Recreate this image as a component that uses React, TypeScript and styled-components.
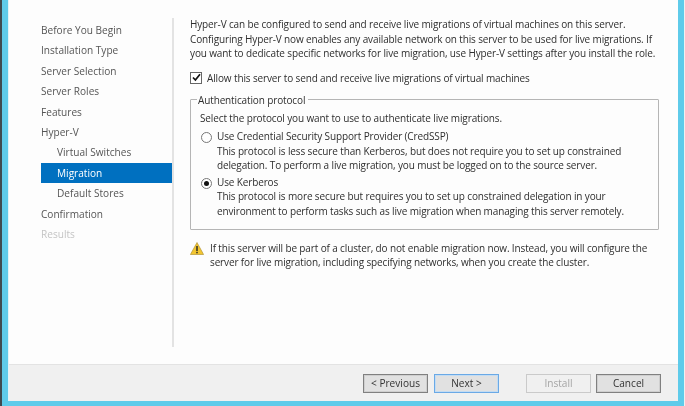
import React from 'react';
import styled, { createGlobalStyle } from 'styled-components';

const GlobalStyle = createGlobalStyle`
  html, body {
    margin: 0;
    padding: 0;
    width: 685px;
    height: 406px;
    overflow: hidden;
    background: #f4f4f4;
  }
`;

const Frame = styled.div`
  width: 685px;
  height: 406px;
  box-sizing: border-box;
  display: flex;
  flex-direction: column;
  padding: 0 6px 5px 6px;
  background: linear-gradient(#5fcbea, #5fcbea) no-repeat;
  border-left: 2px solid #3f4a50;
  border-right: 1px solid #f0f0f0;
  font-family: 'Open Sans', 'Noto Sans', sans-serif;
  font-size: 10.1px;
  color: #333;
  filter: blur(0.4px);
`;

const Dialog = styled.div`
  flex: 1;
  display: flex;
  flex-direction: column;
  background: #fdfdfd;
  border-left: 1px solid #e4f3f8;
`;

const Body = styled.div`
  flex: 1;
  display: flex;
  padding-top: 18px;
  min-height: 0;
`;

const Nav = styled.nav`
  width: 165px;
  height: 329px;
  box-sizing: border-box;
  padding: 2px 0 0 32px;
  border-right: 2px solid #e3e3e3;
  display: flex;
  flex-direction: column;
`;

const NavItem = styled.div<{ $sub?: boolean; $active?: boolean; $disabled?: boolean }>`
  height: 20.4px;
  line-height: 20.4px;
  padding-left: ${p => (p.$sub ? 16 : 0)}px;
  white-space: nowrap;
  color: ${p => (p.$active ? '#fff' : p.$disabled ? '#c4c4c4' : '#555')};
  background: ${p => (p.$active ? '#0070c0' : 'transparent')};
`;

const Content = styled.main`
  width: 469px;
  margin-left: 16px;
  margin-top: -1px;
  display: flex;
  flex-direction: column;
  font-size: 10px;
  letter-spacing: -0.13px;
`;

const Paragraph = styled.p`
  margin: 0;
  line-height: 14.5px;
  white-space: pre;
  color: #2e2e2e;
`;

const CheckRow = styled.div`
  display: flex;
  align-items: center;
  gap: 5px;
  margin-top: 10px;
  height: 14px;
  white-space: pre;
  color: #2e2e2e;
`;

const CheckBox = styled.span`
  width: 10px;
  height: 10px;
  border: 1px solid #666;
  background: #fff;
  display: flex;
  align-items: center;
  justify-content: center;
`;

const Group = styled.fieldset`
  margin: 8px 0 0 0;
  padding: 4px 9px 8px 9px;
  border: 1px solid #b5b5b5;
  border-radius: 1px;
  height: 137px;
  min-width: 0;
  box-sizing: border-box;
  width: 469px;
`;

const Legend = styled.legend`
  padding: 0 3px 0 1px;
  margin-left: -3px;
  line-height: 14px;
  color: #2e2e2e;
`;

const RadioRow = styled.div<{ $gapTop: number }>`
  display: flex;
  gap: 5px;
  margin-top: ${p => p.$gapTop}px;
  padding-left: 1px;
`;

const Radio = styled.span<{ $checked?: boolean }>`
  flex: none;
  width: 9px;
  height: 9px;
  margin-top: 3px;
  border: 1px solid #777;
  border-radius: 50%;
  background: #fff;
  display: flex;
  align-items: center;
  justify-content: center;
  &::after {
    content: '';
    width: 5px;
    height: 5px;
    border-radius: 50%;
    background: ${p => (p.$checked ? '#111' : 'transparent')};
  }
`;

const Warning = styled.div`
  display: flex;
  gap: 6px;
  margin-top: 11px;
`;

const Footer = styled.footer`
  height: 37px;
  flex: none;
  box-sizing: border-box;
  background: #f0f0f0;
  border-top: 1px solid #e3e3e3;
  display: flex;
  align-items: center;
  justify-content: flex-end;
  padding: 0 17px 0 0;
`;

const Button = styled.button<{ $focused?: boolean; $gap?: number }>`
  width: 65px;
  height: 19px;
  margin-left: ${p => p.$gap ?? 6}px;
  padding: 0;
  font: inherit;
  color: #333;
  background: #e1e1e1;
  border: 1px solid ${p => (p.$focused ? '#6aa9e6' : '#808080')};
  box-shadow: inset 0 0 0 1px ${p => (p.$focused ? '#c4dcf2' : '#cfcfcf')};
  &:disabled {
    color: #a5a5a5;
    background: #f0f0f0;
    border-color: #cacaca;
    box-shadow: none;
  }
`;

const navItems = [
  { label: 'Before You Begin' },
  { label: 'Installation Type' },
  { label: 'Server Selection' },
  { label: 'Server Roles' },
  { label: 'Features' },
  { label: 'Hyper-V' },
  { label: 'Virtual Switches', sub: true },
  { label: 'Migration', sub: true, active: true },
  { label: 'Default Stores', sub: true },
  { label: 'Confirmation' },
  { label: 'Results', disabled: true },
];

const App: React.FC = () => (
  <Frame>
    <GlobalStyle />
    <Dialog>
      <Body>
        <Nav>
          {navItems.map(item => (
            <NavItem key={item.label} $sub={item.sub} $active={item.active} $disabled={item.disabled}>
              {item.label}
            </NavItem>
          ))}
        </Nav>
        <Content>
          <Paragraph>
            {'Hyper-V can be configured to send and receive live migrations of virtual machines on this server.\nConfiguring Hyper-V now enables any available network on this server to be used for live migrations. If\nyou want to dedicate specific networks for live migration, use Hyper-V settings after you install the role.'}
          </Paragraph>
          <CheckRow>
            <CheckBox>
              <svg width="9" height="9" viewBox="0 0 9 9">
                <path d="M1 4.5 L3.4 7 L8 1.2" fill="none" stroke="#111" strokeWidth="1.7" />
              </svg>
            </CheckBox>
            Allow this server to send and receive live migrations of virtual machines
          </CheckRow>
          <Group>
            <Legend>Authentication protocol</Legend>
            <Paragraph>Select the protocol you want to use to authenticate live migrations.</Paragraph>
            <RadioRow $gapTop={4}>
              <Radio />
              <Paragraph>
                {'Use Credential Security Support Provider (CredSSP)\nThis protocol is less secure than Kerberos, but does not require you to set up constrained\ndelegation. To perform a live migration, you must be logged on to the source server.'}
              </Paragraph>
            </RadioRow>
            <RadioRow $gapTop={2}>
              <Radio $checked />
              <Paragraph>
                {'Use Kerberos\nThis protocol is more secure but requires you to set up constrained delegation in your\nenvironment to perform tasks such as live migration when managing this server remotely.'}
              </Paragraph>
            </RadioRow>
          </Group>
          <Warning>
            <svg width="14" height="13" viewBox="0 0 14 13" style={{ marginTop: 1, flex: 'none' }}>
              <path d="M7 0.5 L13.6 12.5 L0.4 12.5 Z" fill="#f2c530" stroke="#a8892a" strokeWidth="0.6" />
              <rect x="6.3" y="4" width="1.4" height="5" fill="#222" />
              <rect x="6.3" y="9.8" width="1.4" height="1.5" fill="#222" />
            </svg>
            <Paragraph>
              {'If this server will be part of a cluster, do not enable migration now. Instead, you will configure the\nserver for live migration, including specifying networks, when you create the cluster.'}
            </Paragraph>
          </Warning>
        </Content>
      </Body>
      <Footer>
        <Button>&lt; Previous</Button>
        <Button $focused>Next &gt;</Button>
        <Button disabled $gap={27}>Install</Button>
        <Button $gap={5}>Cancel</Button>
      </Footer>
    </Dialog>
  </Frame>
);

export default App;
